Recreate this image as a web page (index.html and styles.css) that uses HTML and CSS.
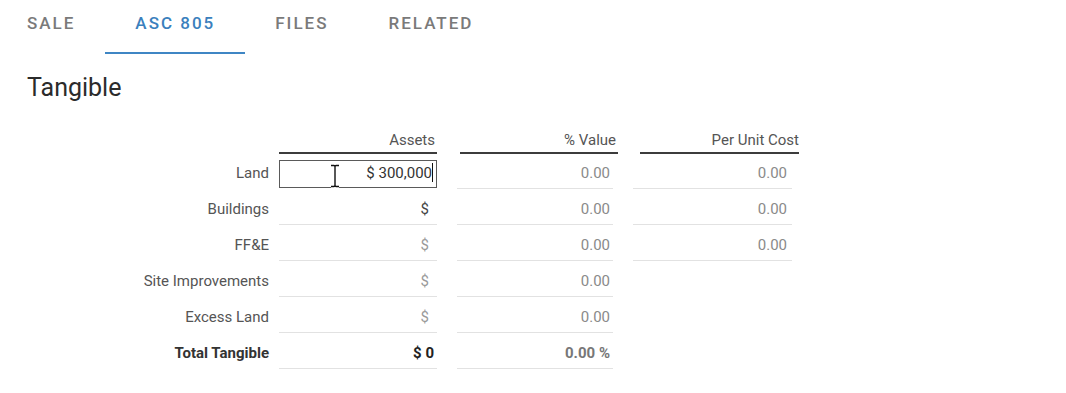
FILE: index.html
```html
<!DOCTYPE html>
<html lang="en">
<head>
    <meta charset="UTF-8">
    <meta name="viewport" content="width=device-width, initial-scale=1.0">
    <title>ASC 805</title>
    <link rel="stylesheet" href="styles.css">
</head>
<body>
    <div class="tabs">
        <div class="tab first">Sale</div>
        <div class="tab active">ASC 805</div>
        <div class="tab">Files</div>
        <div class="tab">Related</div>
    </div>

    <h2 class="section-title">Tangible</h2>

    <div class="alloc">
        <div class="label"></div>
        <div class="col-a"><div class="head">Assets</div></div>
        <div class="col-b"><div class="head">% Value</div></div>
        <div class="col-c"><div class="head">Per Unit Cost</div></div>

        <div class="label land">Land</div>
        <div class="col-a land">
            <div class="input-box">
                <span class="typed">$ 300,000</span><span class="caret"></span>
                <svg class="ibeam" width="10" height="24" viewBox="0 0 10 24">
                    <path d="M1 1.5 H4 Q5 1.5 5 3 V21 Q5 22.5 4 22.5 H1 M9 1.5 H6 Q5 1.5 5 3 M5 21 Q5 22.5 6 22.5 H9" fill="none" stroke="#fff" stroke-width="3"/>
                    <path d="M1 1.5 H4 Q5 1.5 5 3 V21 Q5 22.5 4 22.5 H1 M9 1.5 H6 Q5 1.5 5 3 M5 21 Q5 22.5 6 22.5 H9" fill="none" stroke="#111" stroke-width="1.4"/>
                </svg>
            </div>
        </div>
        <div class="col-b land"><div class="cell">0.00</div></div>
        <div class="col-c land"><div class="cell">0.00</div></div>

        <div class="label">Buildings</div>
        <div class="col-a"><div class="cell dark">$</div></div>
        <div class="col-b"><div class="cell">0.00</div></div>
        <div class="col-c"><div class="cell">0.00</div></div>

        <div class="label">FF&amp;E</div>
        <div class="col-a"><div class="cell light">$</div></div>
        <div class="col-b"><div class="cell">0.00</div></div>
        <div class="col-c"><div class="cell">0.00</div></div>

        <div class="label">Site Improvements</div>
        <div class="col-a"><div class="cell light">$</div></div>
        <div class="col-b"><div class="cell">0.00</div></div>
        <div class="col-c"></div>

        <div class="label">Excess Land</div>
        <div class="col-a"><div class="cell light">$</div></div>
        <div class="col-b"><div class="cell">0.00</div></div>
        <div class="col-c"></div>

        <div class="label total">Total Tangible</div>
        <div class="col-a"><div class="cell total-sum">$ 0</div></div>
        <div class="col-b"><div class="cell total-pct">0.00 %</div></div>
        <div class="col-c"></div>
    </div>
</body>
</html>
```

FILE: styles.css
```css
body {
    font-family: Roboto, "Liberation Sans", sans-serif;
    margin: 0;
    background-color: #fff;
    color: #333;
}
.tabs {
    display: flex;
}
.tab {
    padding: 0 30px 6px;
    line-height: 46px;
    border-bottom: 2px solid transparent;
    font-size: 17px;
    font-weight: 500;
    letter-spacing: 2px;
    text-transform: uppercase;
    color: #7a7a7a;
}
.tab.first {
    padding-left: 27px;
}
.tab.active {
    color: #3a80bd;
    border-bottom-color: #3f86c4;
}
.section-title {
    margin: 19px 0 0 27px;
    font-size: 25px;
    line-height: 30px;
    font-weight: 400;
    color: #2b2b2b;
}
.alloc {
    display: grid;
    grid-template-columns: 279px 178px 176px 166px;
    margin-top: 27px;
    font-size: 15px;
}
.label {
    padding: 4px 10px 0 0;
    height: 36px;
    box-sizing: border-box;
    line-height: 32px;
    text-align: right;
    color: #555;
}
.label:first-child {
    height: 24px;
}
.label.land {
    height: 35px;
    padding-top: 6px;
    line-height: 26px;
}
.label.total {
    font-weight: 700;
    color: #333;
}
.head {
    padding: 0 2px 2px 0;
    line-height: 20px;
    border-bottom: 2px solid #3c3c3c;
    text-align: right;
    color: #555;
}
.col-a {
    padding-right: 20px;
}
.col-b {
    padding-right: 15px;
}
.col-b .head {
    margin-left: 3px;
}
.col-b .cell {
    margin-right: 5px;
    padding-right: 3px;
}
.col-c .head {
    margin-left: 7px;
    padding-right: 0;
}
.col-c .cell {
    margin-right: 7px;
    padding-right: 5px;
}
.cell {
    height: 36px;
    box-sizing: border-box;
    padding: 4px 8px 0 0;
    line-height: 32px;
    border-bottom: 1px solid #e2e2e2;
    text-align: right;
    color: #8a8a8a;
}
.land .cell {
    height: 35px;
    padding-top: 6px;
    line-height: 26px;
}
.cell.dark {
    color: #444;
}
.cell.light {
    color: #9a9a9a;
}
.cell.total-sum {
    padding-right: 3px;
    font-weight: 700;
    color: #222;
}
.cell.total-pct {
    font-weight: 700;
    color: #777;
}
.input-box {
    position: relative;
    margin-top: 6px;
    height: 28px;
    box-sizing: border-box;
    border: 1.5px solid #5a5a5a;
    padding-right: 3px;
    line-height: 24px;
    text-align: right;
    color: #333;
}
.caret {
    display: inline-block;
    width: 1px;
    height: 19px;
    vertical-align: -4px;
    background-color: #111;
}
.ibeam {
    position: absolute;
    left: 50px;
    top: 3px;
}
```
